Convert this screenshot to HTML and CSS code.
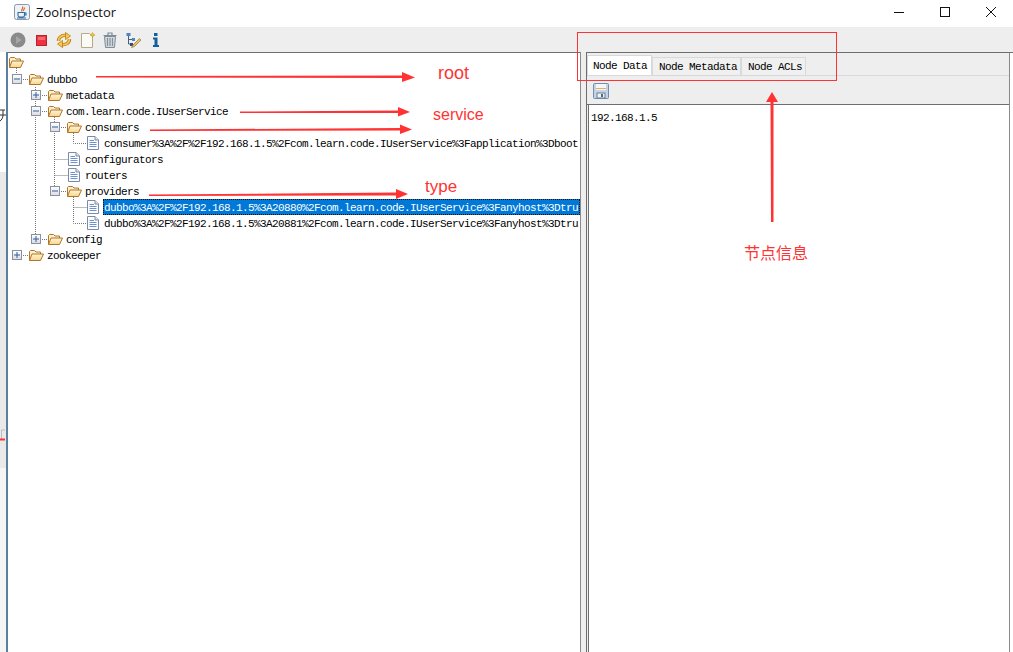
FILE: index.html
```html
<!DOCTYPE html>
<html lang="en">
<head>
    <meta charset="UTF-8">
    <meta name="viewport" content="width=device-width, initial-scale=1.0">
    <title>ZooInspector</title>
    <link rel="stylesheet" href="styles.css">
</head>
<body>
    <!-- shared tree icons -->
    <svg class="defs" width="0" height="0">
        <defs>
            <linearGradient id="folderFill" x1="0" y1="0" x2="0" y2="1">
                <stop offset="0" stop-color="#fff6d8"/>
                <stop offset="1" stop-color="#f8d58e"/>
            </linearGradient>
            <linearGradient id="boxFill" x1="0" y1="0" x2="0" y2="1">
                <stop offset="0" stop-color="#ffffff"/>
                <stop offset="1" stop-color="#d8dce4"/>
            </linearGradient>
            <symbol id="folder" viewBox="0 0 16 13">
                <path d="M1.5 11.500V2.500L2.500 1.500H6.500L8 3H12.500V5" fill="#fdf0c8" stroke="#b0742a"/>
                <path d="M1.500 11.500L4 5H15.500L12.500 11.500Z" fill="url(#folderFill)" stroke="#b0742a" stroke-linejoin="round"/>
            </symbol>
            <symbol id="doc" viewBox="0 0 12 14">
                <path d="M.5.500H8L11.500 4V13.500H.5Z" fill="#fbfcff" stroke="#7c8ba8"/>
                <path d="M8 .5V4H11.500" fill="#dde4f0" stroke="#7c8ba8"/>
                <path d="M2.500 4.500H7M2.500 6.500H9.500M2.500 8.500H9.500M2.500 10.500H9.500" stroke="#6f93c8"/>
            </symbol>
            <symbol id="minus" viewBox="0 0 10 10">
                <rect x=".5" y=".5" width="9" height="9" fill="url(#boxFill)" stroke="#8b919c"/>
                <path d="M2 5H8" stroke="#2f5f9f"/>
            </symbol>
            <symbol id="plus" viewBox="0 0 10 10">
                <rect x=".5" y=".5" width="9" height="9" fill="url(#boxFill)" stroke="#8b919c"/>
                <path d="M2 5H8M5 2V8" stroke="#2f5f9f"/>
            </symbol>
        </defs>
    </svg>

    <div class="titlebar">
        <svg class="app-icon" width="16" height="16" viewBox="0 0 16 16">
            <rect x=".5" y=".5" width="15" height="15" rx="2" fill="#eef1f5" stroke="#8c97a6"/>
            <path d="M8.500 2.500C10 4.500 6.500 5 8 7.500M10.500 3.500C11 5 9 5.500 9.500 7" fill="none" stroke="#d9661f" stroke-width="1.200"/>
            <path d="M4 8.500H10.500V11.500C10.500 12.500 9.500 13 8.500 13H6C5 13 4 12.500 4 11.500ZM10.500 9H12V11H10.500M3 14H12" fill="none" stroke="#2f6ea8" stroke-width="1.100"/>
        </svg>
        <span class="app-name">ZooInspector</span>
        <div class="win-controls">
            <svg width="46" height="22" viewBox="0 0 46 22"><path d="M18 11.500H28" stroke="#111"/></svg>
            <svg width="46" height="22" viewBox="0 0 46 22"><rect x="18.500" y="6.500" width="9" height="9" fill="none" stroke="#111"/></svg>
            <svg width="46" height="22" viewBox="0 0 46 22"><path d="M18 6L28 16M28 6L18 16" stroke="#111"/></svg>
        </div>
    </div>

    <div class="toolbar">
        <svg class="tool" viewBox="0 0 16 16">
            <circle cx="8" cy="8" r="7.500" fill="#8a8a8a"/>
            <path d="M6 4L12 8L6 12Z" fill="#a5a5a5"/>
        </svg>
        <svg class="tool" viewBox="0 0 16 16">
            <rect x="3.500" y="3.500" width="10" height="10" fill="#ee3340" stroke="#b8242c"/>
            <rect x="5" y="5" width="7" height="3" fill="#f56a72"/>
        </svg>
        <svg class="tool" viewBox="0 0 16 16">
            <path d="M2.500 9C2.500 5 6 3 10 3.500M13.500 7C13.500 11 10 13 6 12.500" fill="none" stroke="#b97c12" stroke-width="3.400"/>
            <path d="M2.500 9C2.500 5 6 3 10 3.500M13.500 7C13.500 11 10 13 6 12.500" fill="none" stroke="#f6c94f" stroke-width="1.800"/>
            <path d="M9.500 .5L14.500 4L9.500 7.500Z" fill="#f6c94f" stroke="#b97c12" stroke-width=".8"/>
            <path d="M6.500 8.500L1.500 12L6.500 15.500Z" fill="#f6c94f" stroke="#b97c12" stroke-width=".8"/>
        </svg>
        <svg class="tool" viewBox="0 0 16 16">
            <path d="M2.500 1.500H10.500L13.500 4.500V15.500H2.500Z" fill="#fbfbf6" stroke="#b5ab8c"/>
            <path d="M13.500 .5L14.300 2.200L16 3L14.300 3.800L13.500 5.500L12.700 3.800L11 3L12.700 2.200Z" fill="#f2c230" stroke="#b98c10" stroke-width=".5"/>
        </svg>
        <svg class="tool" viewBox="0 0 16 16">
            <path d="M1.500 3.500H14.500M6 3.500V1H10V3.500" fill="none" stroke="#7f8b96" stroke-width="1.200"/>
            <path d="M2.500 4.500L3.500 15.500H12.500L13.500 4.500Z" fill="#d3d9df" stroke="#7f8b96"/>
            <path d="M5.500 6V14M8 6V14M10.500 6V14" stroke="#84919c" stroke-width="1.200"/>
        </svg>
        <svg class="tool" viewBox="0 0 16 16">
            <path d="M3.500 4V12H7M3.500 7.500H7" fill="none" stroke="#44607f"/>
            <rect x="1.500" y="1" width="4" height="3" fill="#4f83bb"/>
            <rect x="7" y="6" width="3" height="3" fill="#4f83bb"/>
            <rect x="5" y="11" width="3" height="3" fill="#2f4f78"/>
            <path d="M14.500 6.500L8 13L6.500 15.500L9.500 14.500L16 8Z" fill="#e7bd6f" stroke="#9c7430" stroke-width=".7"/>
        </svg>
        <svg class="tool" viewBox="0 0 16 16">
            <rect x="6" y="1" width="3.500" height="3" fill="#14609f"/>
            <path d="M5 5.500H9.500V13H11V15H5V13H6.500V7.500H5Z" fill="#14609f"/>
        </svg>
    </div>

    <div class="main">
        <div class="desk-strip">
            <div class="strip-top"></div>
            <div class="strip-mid"></div>
            <div class="strip-low"></div>
            <svg class="strip-glyph" width="6" height="14" viewBox="0 0 6 14"><path d="M0 2H5M0 7H6M3 2V7C3 10 1.500 12 0 13" fill="none" stroke="#333"/></svg>
            <svg class="strip-mark" width="6" height="12" viewBox="0 0 6 12"><path d="M1.500 11V1H5" fill="none" stroke="#bbb"/><path d="M0 10.500H5" stroke="#f33" stroke-width="2"/></svg>
        </div>

        <div class="tree">
            <svg class="tree-guides" width="572" height="260" viewBox="8 53 572 260">
                <path d="M16.500 66V74M21 79.500H28M35.500 87V234M40 95.500H47M40 111.500H47M40 239.500H47M54.500 117V186M59 127.500H66M54.500 159.500H68M54.500 175.500H68M59 191.500H66M73.500 133V143.500H87M73.500 197V223.500H87M73.500 207.500H87M21 255.500H28" fill="none" stroke="#777" stroke-dasharray="1 1"/>
            </svg>

            <div class="row root-row"><svg class="folder"><use href="#folder"/></svg></div>
            <div class="row lvl-1"><svg class="exp"><use href="#minus"/></svg><svg class="folder"><use href="#folder"/></svg><span class="label">dubbo</span></div>
            <div class="row lvl-2"><svg class="exp"><use href="#plus"/></svg><svg class="folder"><use href="#folder"/></svg><span class="label">metadata</span></div>
            <div class="row lvl-2"><svg class="exp"><use href="#minus"/></svg><svg class="folder"><use href="#folder"/></svg><span class="label">com.learn.code.IUserService</span></div>
            <div class="row lvl-3"><svg class="exp"><use href="#minus"/></svg><svg class="folder"><use href="#folder"/></svg><span class="label">consumers</span></div>
            <div class="row leaf-4"><svg class="doc"><use href="#doc"/></svg><span class="label">consumer%3A%2F%2F192.168.1.5%2Fcom.learn.code.IUserService%3Fapplication%3Dboot</span></div>
            <div class="row leaf-3"><svg class="doc"><use href="#doc"/></svg><span class="label">configurators</span></div>
            <div class="row leaf-3"><svg class="doc"><use href="#doc"/></svg><span class="label">routers</span></div>
            <div class="row lvl-3"><svg class="exp"><use href="#minus"/></svg><svg class="folder"><use href="#folder"/></svg><span class="label">providers</span></div>
            <div class="row leaf-4 selected"><svg class="doc"><use href="#doc"/></svg><span class="label">dubbo%3A%2F%2F192.168.1.5%3A20880%2Fcom.learn.code.IUserService%3Fanyhost%3Dtru</span></div>
            <div class="row leaf-4"><svg class="doc"><use href="#doc"/></svg><span class="label">dubbo%3A%2F%2F192.168.1.5%3A20881%2Fcom.learn.code.IUserService%3Fanyhost%3Dtru</span></div>
            <div class="row lvl-2"><svg class="exp"><use href="#plus"/></svg><svg class="folder"><use href="#folder"/></svg><span class="label">config</span></div>
            <div class="row lvl-1"><svg class="exp"><use href="#plus"/></svg><svg class="folder"><use href="#folder"/></svg><span class="label">zookeeper</span></div>
        </div>

        <div class="splitter"></div>

        <div class="details">
            <div class="tabs">
                <div class="tab active">Node Data</div>
                <div class="tab">Node Metadata</div>
                <div class="tab">Node ACLs</div>
            </div>
            <div class="tab-body">
                <div class="save-bar">
                    <svg width="16" height="16" viewBox="0 0 16 16">
                        <rect x=".5" y=".5" width="15" height="15" rx="1" fill="#c5d3e4" stroke="#6d8db3"/>
                        <rect x="3" y="1" width="10" height="6" fill="#f4f6f8"/>
                        <path d="M3 5.500H13" stroke="#e0b060"/>
                        <rect x="4" y="10" width="8" height="5" fill="#eef1f4" stroke="#6d7f95"/>
                        <rect x="8" y="11" width="2" height="3" fill="#55677d"/>
                    </svg>
                </div>
                <div class="data-area">192.168.1.5</div>
            </div>
        </div>
    </div>

    <!-- red annotations drawn over the screenshot -->
    <svg class="notes" width="1013" height="652" viewBox="0 0 1013 652">
        <rect x="577.500" y="32.500" width="259" height="48" fill="none" stroke="#f33"/>
        <path d="M96 76L402 75.500L402 72L415 77.500L402 82L402 78L96 77.500Z" fill="#f33"/>
        <path d="M240 111.500L398 110.500L398 107L410 112L398 116.500L398 113L240 113Z" fill="#f33"/>
        <path d="M150 129.500L400 128L400 124.500L412 129.500L400 134L400 130.500L150 131Z" fill="#f33"/>
        <path d="M149 194.500L396 192.500L396 189L408 194L396 199L396 195.500L149 196Z" fill="#f33"/>
        <path d="M771 222L770.500 102L766 102L772 92L778 102L773.500 102L773.500 222Z" fill="#f33"/>
    </svg>
    <span class="note note-root">root</span>
    <span class="note note-service">service</span>
    <span class="note note-type">type</span>
    <span class="note note-info">节点信息</span>
</body>
</html>
```

FILE: styles.css
```css
* {
    margin: 0;
    padding: 0;
    box-sizing: border-box;
}

html, body {
    height: 100%;
    overflow: hidden;
}

body {
    position: relative;
    display: flex;
    flex-direction: column;
    background-color: #fff;
    font-family: 'Liberation Mono', monospace;
    font-size: 11px;
    letter-spacing: -0.6px;
    color: #000;
}

.defs {
    position: absolute;
}

/* title bar */
.titlebar {
    display: flex;
    align-items: center;
    height: 27px;
    flex-shrink: 0;
    padding: 0 0 3px 14px;
    background-color: #fff;
}

.app-name {
    margin-left: 6px;
    font-family: 'Open Sans', sans-serif;
    font-size: 13px;
    letter-spacing: 0;
    color: #111;
}

.win-controls {
    display: flex;
    margin-left: auto;
    margin-right: -1px;
}

/* toolbar */
.toolbar {
    display: flex;
    align-items: center;
    gap: 7px;
    height: 26px;
    flex-shrink: 0;
    padding-left: 10px;
    background-color: #eeeeee;
    border-bottom: 1px solid #6e6e6e;
}

.tool {
    width: 16px;
    height: 16px;
}

/* main area */
.main {
    display: flex;
    flex: 1;
    min-height: 0;
}

.desk-strip {
    position: relative;
    display: flex;
    flex-direction: column;
    width: 8px;
    flex-shrink: 0;
    margin-top: -1px;
    border-right: 2px solid #5d7f9f;
}

.strip-top {
    height: 120px;
    background-color: #fff;
}

.strip-mid {
    height: 296px;
    background-color: #e9e9e9;
}

.strip-low {
    flex: 1;
    background-color: #f5f5f5;
}

.strip-glyph {
    position: absolute;
    left: 0;
    top: 56px;
}

.strip-mark {
    position: absolute;
    left: 0;
    top: 377px;
}

/* tree */
.tree {
    position: relative;
    width: 572px;
    flex-shrink: 0;
    overflow: hidden;
    padding-top: 1px;
    background-color: #fff;
}

.tree-guides {
    position: absolute;
    left: 0;
    top: 0;
}

.row {
    position: relative;
    display: flex;
    align-items: center;
    height: 16px;
    white-space: nowrap;
}

.root-row {
    height: 17px;
}

.exp {
    width: 10px;
    height: 10px;
    flex-shrink: 0;
}

.folder {
    width: 16px;
    height: 13px;
    flex-shrink: 0;
    margin-left: 6px;
    margin-right: 2px;
}

.root-row .folder {
    margin-left: 0;
}

.doc {
    width: 12px;
    height: 14px;
    flex-shrink: 0;
    margin-right: 4px;
}

.lvl-1 { padding-left: 4px; }
.lvl-2 { padding-left: 23px; }
.lvl-3 { padding-left: 42px; }
.leaf-3 { padding-left: 60px; }
.leaf-4 { padding-left: 79px; }

.label {
    height: 16px;
    padding-top: 2px;
    border: 1px solid transparent;
    line-height: 13px;
}

.selected .label {
    flex: 1;
    overflow: hidden;
    background-color: #0078d7;
    color: #fff;
    border: 1px dotted #111;
}

/* splitter and right side */
.splitter {
    width: 7px;
    flex-shrink: 0;
    background-color: #eeeeee;
    border-left: 1px solid #8a8a8a;
    border-right: 1px solid #6e6e6e;
    margin-top: -1px;
}

.details {
    display: flex;
    flex-direction: column;
    flex: 1;
    min-width: 0;
    background-color: #eeeeee;
    margin-right: 3px;
    border-right: 1px solid #8a8a8a;
}

.tabs {
    display: flex;
    align-items: flex-end;
    height: 23px;
    flex-shrink: 0;
    border-bottom: 1px solid #d9d9d9;
}

.tab {
    display: flex;
    align-items: center;
    height: 18px;
    padding: 1px 3px 0 6px;
    background-color: #f0f0f0;
    border: 1px solid #d9d9d9;
    border-bottom: none;
}

.tab.active {
    height: 20px;
    padding: 0 4px 0 5px;
    background-color: #fff;
}

.tab-body {
    display: flex;
    flex-direction: column;
    flex: 1;
    min-height: 0;
}

.save-bar {
    display: flex;
    align-items: center;
    height: 29px;
    flex-shrink: 0;
    padding: 2px 0 0 6px;
    border-bottom: 1px solid #6e6e6e;
}

.data-area {
    flex: 1;
    padding: 7px 2px;
    margin-left: 1px;
    background-color: #fff;
    border-left: 1px solid #6e6e6e;
}

/* annotations */
.notes {
    position: absolute;
    left: 0;
    top: 0;
    pointer-events: none;
}

.note {
    position: absolute;
    font-family: 'Liberation Sans', sans-serif;
    font-size: 16px;
    letter-spacing: 0;
    line-height: 18px;
    color: #f33;
}

.note-root { left: 438px; top: 64px; font-size: 18px; }
.note-service { left: 433px; top: 106px; }
.note-type { left: 425px; top: 178px; font-size: 17px; }
.note-info {
    left: 744px;
    top: 243px;
    font-family: 'Noto Sans CJK SC', sans-serif;
}
```
